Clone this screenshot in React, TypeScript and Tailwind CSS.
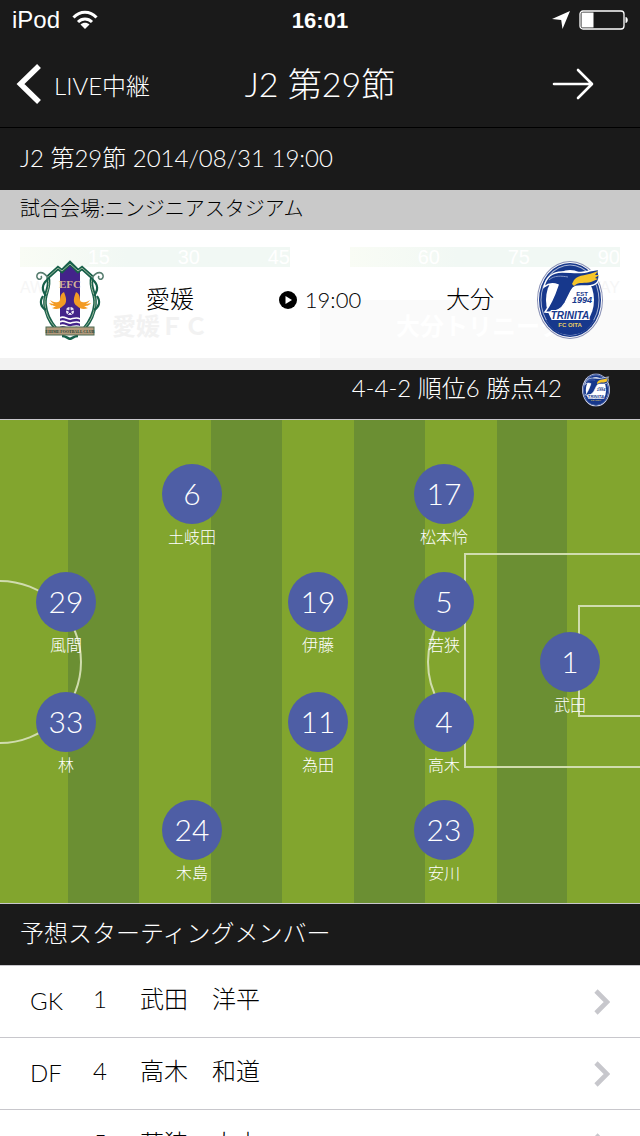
const players = [
  { number: 6, name: '土岐田', x: 192, y: 74 },
  { number: 17, name: '松本怜', x: 444, y: 74 },
  { number: 29, name: '風間', x: 66, y: 182 },
  { number: 19, name: '伊藤', x: 318, y: 182 },
  { number: 5, name: '若狭', x: 444, y: 182 },
  { number: 1, name: '武田', x: 570, y: 242 },
  { number: 33, name: '林', x: 66, y: 302 },
  { number: 11, name: '為田', x: 318, y: 302 },
  { number: 4, name: '高木', x: 444, y: 302 },
  { number: 24, name: '木島', x: 192, y: 410 },
  { number: 23, name: '安川', x: 444, y: 410 },
];

const members = [
  { position: 'GK', number: 1, name: '武田　洋平' },
  { position: 'DF', number: 4, name: '高木　和道' },
  { position: 'DF', number: 5, name: '若狭　大志' },
];

const PITCH_WIDTH = 640;
const PITCH_HEIGHT = 483;

function EhimeEmblem() {
  return (
    <svg viewBox="0 0 68 80" className="h-20 w-17" role="img" aria-label="愛媛FC">
      <path d="M12 16 L22 7 L26 10 L34 3 L42 10 L46 7 L56 16 C54 26 60 34 60 43 C60 58 50 73 34 77 C18 73 8 58 8 43 C8 34 14 26 12 16Z" fill="#fff" />
      <path d="M24 12 L34 4 L44 12 V68 H24Z" fill="#43238a" />
      <path d="M12 17 L22 8 L26 11 L34 3 L42 11 L46 8 L56 17" fill="none" stroke="#17604a" strokeWidth="4" />
      <path d="M12 17 L22 8 L26 11 L34 4 L42 11 L46 8 L56 17" fill="none" stroke="#9db79c" strokeWidth="1" />
      <path d="M12 17 C15 28 8 33 9 44 C10 55 14 62 20 69 M56 17 C53 28 60 33 59 44 C58 55 54 62 48 69" fill="none" stroke="#17604a" strokeWidth="3.6" />
      <path d="M12 19 C15 29 8 34 9 44 C10 55 14 62 20 68 M56 19 C53 29 60 34 59 44 C58 55 54 62 48 68" fill="none" stroke="#9db79c" strokeWidth="1" />
      <path d="M12 18 C7 10 0 12 1 17 C2 21 7 19 5 16 M56 18 C61 10 68 12 67 17 C66 21 61 19 63 16" fill="none" stroke="#587e70" strokeWidth="1.6" />
      <path d="M12 19 C5 25 6 30 10 36 M56 19 C63 25 62 30 58 36 M7 36 C3 42 5 47 10 50 M61 36 C65 42 63 47 58 50" fill="none" stroke="#17604a" strokeWidth="2.2" />
      <text x="34" y="28" textAnchor="middle" fontFamily="Liberation Serif, serif" fontSize="11" fontWeight="700" fill="#d3b498">EFC</text>
      <path d="M28 32 C22 35 26 41 22 42 C18 43 16 41 14 40 C15 42 17 43 18 44 C16 44 14 43 13 43 C15 46 18 46 20 46 C18 47 17 48 16 48 C20 50 24 49 27 46 C32 43 30 37 28 32Z" fill="#f39b24" />
      <path d="M40 32 C46 35 42 41 46 42 C50 43 52 41 54 40 C53 42 51 43 50 44 C52 44 54 43 55 43 C53 46 50 46 48 46 C50 47 51 48 52 48 C48 50 44 49 41 46 C36 43 38 37 40 32Z" fill="#f39b24" />
      <circle cx="34" cy="51" r="4" fill="#e8e4f2" />
      <path d="M34 49 L36 50.5 L35.2 53 H32.8 L32 50.5Z" fill="#43238a" />
      <path d="M34 47 V49 M30 50 L32 50.5 M38 50 L36 50.5 M31.5 54.5 L32.8 53 M36.5 54.5 L35.2 53" stroke="#43238a" strokeWidth="1" />
      <path d="M24 58 C28 55 31 60 35 59 C39 58 41 57 44 59 M24 62 C28 59 31 64 35 63 C39 62 41 61 44 63 M24 66 C28 63 31 68 35 67 C39 66 41 65 44 67" fill="none" stroke="#fff" strokeWidth="1.6" />
      <path d="M26 76 C30 76 31 78 34 79 C37 78 38 76 42 76" fill="none" stroke="#17604a" strokeWidth="2.5" />
      <rect x="10" y="67" width="48" height="8" fill="#b49a7c" stroke="#4f6b52" strokeWidth="1" />
      <text x="34" y="73" textAnchor="middle" fontFamily="Liberation Serif, serif" fontSize="4" fontWeight="700" fill="#1d4235">EHIME FOOTBALL CLUB</text>
    </svg>
  );
}

function TrinitaEmblem({ className }: { className: string }) {
  return (
    <svg viewBox="0 0 66 80" className={className} role="img" aria-label="大分トリニータ">
      <ellipse cx="33" cy="40" rx="33" ry="39" fill="#8990b5" />
      <ellipse cx="33" cy="40" rx="32" ry="38" fill="#fff" />
      <ellipse cx="33" cy="40" rx="31" ry="37" fill="#17388c" />
      <ellipse cx="33" cy="40" rx="29.5" ry="35.5" fill="#a9b5d4" />
      <ellipse cx="33" cy="40" rx="28.5" ry="34.5" fill="#17388c" />
      <ellipse cx="33" cy="40" rx="24" ry="30" fill="#fff" />
      <path d="M9 60 H57 C52 70 43 75 33 75 C23 75 14 70 9 60Z" fill="#17388c" />
      <path d="M7 27 C9 17 16 12 25 12 C35 12 45 14 52 11 L63 9 C59 12 63 13 62 18 C61 25 55 26 48 26 C41 26 37 25 34 31 L28 43 C24 50 18 53 8 52 C14 44 18 34 21 25 C16 23 12 23 7 27Z" fill="#17388c" stroke="#fff" strokeWidth="1.5" />
      <path d="M12 20 C17 15 25 16 31 17" fill="none" stroke="#8294c5" strokeWidth="1" />
      <path d="M37 20 C42 14 50 16 61 11 L58 15 L62 15 L58 18 L61 19 L54 22 C48 24 42 21 37 26 L35 24Z" fill="#f6c52a" />
      <text x="45" y="36" textAnchor="middle" fontFamily="Liberation Sans, sans-serif" fontSize="6" fontWeight="700" fill="#17388c">EST</text>
      <text x="45" y="43" textAnchor="middle" fontFamily="Liberation Sans, sans-serif" fontSize="9" fontWeight="700" fontStyle="italic" fill="#17388c">1994</text>
      <text x="33" y="59" textAnchor="middle" fontFamily="Liberation Sans, sans-serif" fontSize="10" fontWeight="700" fontStyle="italic" fill="#17388c" stroke="#fff" strokeWidth="2" paintOrder="stroke">TRINITA</text>
      <text x="33" y="67" textAnchor="middle" fontFamily="Liberation Sans, sans-serif" fontSize="6" fontWeight="700" fill="#e9cf62">FC OITA</text>
    </svg>
  );
}

function StatusBar() {
  return (
    <div className="flex h-10 items-center px-3 font-['Liberation_Sans',sans-serif]">
      <div className="flex flex-1 items-center gap-3">
        <span className="text-2xl">iPod</span>
        <svg viewBox="0 0 26 20" className="h-5 w-[26px]" fill="none" stroke="currentColor" strokeWidth="3">
          <path d="M1.5 7.5 C8 0.5 18 0.5 24.5 7.5" />
          <path d="M6 12 C10 8 16 8 20 12" />
          <path d="M13 19 L8.5 14.5 C11 12 15 12 17.5 14.5Z" fill="currentColor" stroke="none" />
        </svg>
      </div>
      <span className="text-[22px] font-bold">16:01</span>
      <div className="flex flex-1 items-center justify-end gap-2">
        <svg viewBox="0 0 18 18" className="size-[18px]" fill="currentColor">
          <path d="M18 0 L10.5 18 L9.2 9 L0 8Z" />
        </svg>
        <svg viewBox="0 0 50 20" className="h-5 w-[50px]">
          <rect x="2" y="1" width="44" height="18" rx="3" fill="none" stroke="currentColor" strokeWidth="1.3" />
          <rect x="3.5" y="2.5" width="12" height="15" fill="currentColor" />
          <path d="M47.5 7 C50.5 7 50.5 13 47.5 13Z" fill="currentColor" />
        </svg>
      </div>
    </div>
  );
}

function NavBar() {
  return (
    <nav className="flex h-[88px] items-center border-b border-black px-4">
      <div className="flex-1">
        <button type="button" className="flex items-center gap-3 text-2xl">
          <svg viewBox="0 0 26 40" className="h-10 w-[26px]" fill="none" stroke="currentColor" strokeWidth="5.5">
            <path d="M23 2 L4.5 20 L23 38" />
          </svg>
          <span className="pt-1">LIVE中継</span>
        </button>
      </div>
      <h1 className="text-[34px] leading-10">J2 第29節</h1>
      <div className="flex flex-1 justify-end">
        <button type="button" aria-label="次の節" className="mr-[30px]">
          <svg viewBox="0 0 42 32" className="h-8 w-[42px]" fill="none" stroke="currentColor" strokeWidth="2.6" strokeLinecap="round" strokeLinejoin="round">
            <path d="M2 16 H39 M26 2 L40 16 L26 30" />
          </svg>
        </button>
      </div>
    </nav>
  );
}

// Faint remains of the page that scrolls beneath the translucent card
function ScrolledContent() {
  const halves = [
    ['15', '30', '45'],
    ['60', '75', '90'],
  ];
  return (
    <div aria-hidden="true" className="absolute inset-0 flex flex-col overflow-hidden bg-white font-['Liberation_Sans','Noto_Sans_CJK_JP',sans-serif]">
      <div className="flex justify-between px-5 pt-[17px]">
        {halves.map((half) => (
          <div key={half[0]} className="flex h-5 w-[45%] bg-linear-to-r from-[#f9fcf5] to-[#f1f8f4] to-40% text-xl leading-5 text-white">
            {half.map((minute) => (
              <span key={minute} className="flex-1 text-right">{minute}</span>
            ))}
          </div>
        ))}
      </div>
      <div className="flex flex-1 items-end justify-between px-5 text-base text-[#f6f6f6]">
        <span>AWAY</span>
        <span>AWAY</span>
      </div>
      <div className="flex h-[58px] text-2xl leading-[54px] font-bold">
        <span className="flex-1 text-center text-[#f2f2f2]">愛媛ＦＣ</span>
        <span className="flex-1 bg-[#fafafa] text-center text-white">大分トリニータ</span>
      </div>
    </div>
  );
}

function MatchCard() {
  return (
    <section className="relative h-32">
      <ScrolledContent />
      <div className="relative flex h-full items-center pt-3 text-2xl">
        <div className="flex w-[140px] justify-center">
          <EhimeEmblem />
        </div>
        <span className="w-15 pb-0.5 text-center">愛媛</span>
        <div className="flex flex-1 items-center justify-center gap-2 text-[22px]">
          <svg viewBox="0 0 18 18" className="size-[18px]">
            <circle cx="9" cy="9" r="9" fill="#000" />
            <path d="M6.5 5 L13 9 L6.5 13Z" fill="#fff" />
          </svg>
          <time>19:00</time>
        </div>
        <span className="w-15 pb-0.5 text-center">大分</span>
        <div className="flex w-[140px] justify-center">
          <TrinitaEmblem className="h-20 w-[66px]" />
        </div>
      </div>
    </section>
  );
}

function Pitch() {
  return (
    <section className="relative h-[485px] border-y border-[#c8c7cc] bg-[#82a52e]">
      <svg viewBox={`0 0 ${PITCH_WIDTH} ${PITCH_HEIGHT}`} preserveAspectRatio="none" className="h-full w-full">
        <g fill="#6b8f33">
          <rect x="68" width="71" height="483" />
          <rect x="211" width="71" height="483" />
          <rect x="354" width="71" height="483" />
          <rect x="497" width="70" height="483" />
        </g>
        <g fill="none" stroke="#d0dcae" strokeWidth="2">
          <circle cx="0" cy="242" r="81" />
          <path d="M465 174 A81 81 0 0 0 465 310" />
          <path d="M641 134 H465 V347 H641" />
          <path d="M641 186 H579 V296 H641" />
        </g>
      </svg>
      {players.map((player) => (
        <div
          key={player.number}
          className="absolute flex w-20 -translate-x-1/2 flex-col items-center text-white"
          style={{
            left: `${(player.x / PITCH_WIDTH) * 100}%`,
            top: `${((player.y - 30) / PITCH_HEIGHT) * 100}%`,
          }}
        >
          <span className="flex size-15 items-center justify-center rounded-full bg-[#4e5ea5] pb-0.5 text-[30px]">{player.number}</span>
          <span className="text-base leading-[26px]">{player.name}</span>
        </div>
      ))}
    </section>
  );
}

export default function App() {
  return (
    <div className="flex h-screen w-full flex-col overflow-hidden bg-white font-['Lato','Noto_Sans_CJK_JP',sans-serif] font-light text-black">
      <header className="shrink-0 bg-[#1a1a1a] text-white">
        <StatusBar />
        <NavBar />
        <h2 className="flex h-[62px] items-center px-5 pb-0.5 text-2xl">J2 第29節 2014/08/31 19:00</h2>
      </header>
      <main className="shrink-0">
        <p className="flex h-10 items-center bg-[#c9c9c9] px-5 pb-1 text-xl">試合会場:ニンジニアスタジアム</p>
        <MatchCard />
        <div className="h-3 bg-[#f2f2f2]" />
        <div className="flex h-[49px] items-center justify-end gap-5 bg-[#1a1a1a] px-[30px] pb-2.5 text-2xl text-white">
          <span className="pb-1">4-4-2 順位6 勝点42</span>
          <TrinitaEmblem className="h-[34px] w-7" />
        </div>
        <Pitch />
        <h2 className="flex h-[61px] items-center bg-[#1a1a1a] px-5 pb-1 text-2xl text-white">予想スターティングメンバー</h2>
        <ul className="border-t border-[#c8c7cc]">
          {members.map((member) => (
            <li key={member.number} className="border-b border-[#c8c7cc]">
              <a href="#" className="flex h-[71px] items-center px-[30px] text-2xl">
                <span className="w-12 pb-0.5">{member.position}</span>
                <span className="w-11 pb-1.5 text-center">{member.number}</span>
                <span className="ml-[18px] flex-1 pb-1.5">{member.name}</span>
                <svg viewBox="0 0 16 26" className="h-[26px] w-4" fill="none" stroke="#c7c7cc" strokeWidth="4.6">
                  <path d="M2 2 L13 13 L2 24" />
                </svg>
              </a>
            </li>
          ))}
        </ul>
      </main>
    </div>
  );
}
